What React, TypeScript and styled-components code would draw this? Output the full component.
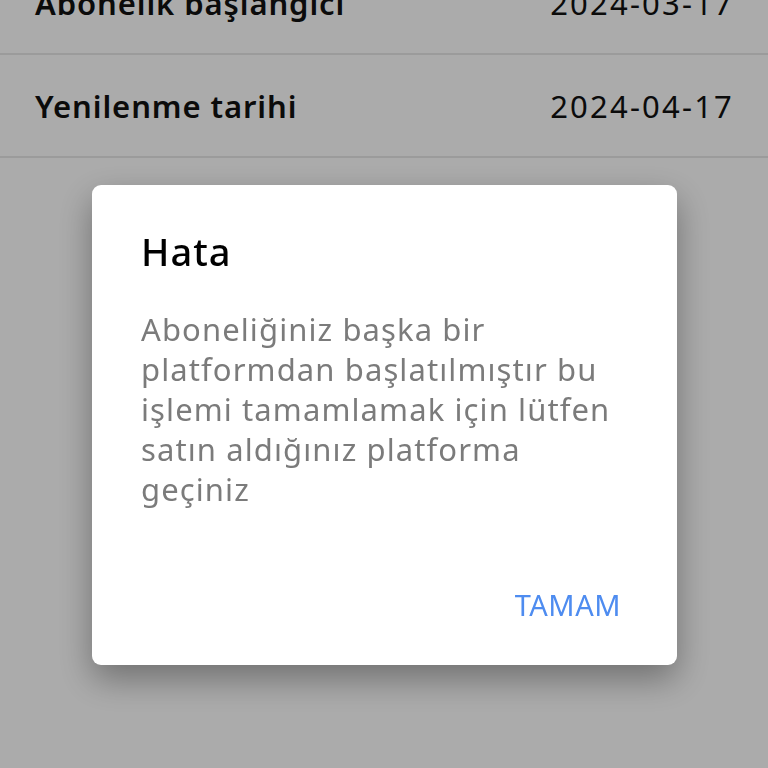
import React from 'react';
import styled, { createGlobalStyle } from 'styled-components';

const GlobalStyle = createGlobalStyle`
  html, body {
    margin: 0;
    padding: 0;
    background: #ffffff;
    font-family: 'Noto Sans', 'Open Sans', sans-serif;
    overflow: hidden;
  }
`;

// Subscription details list (scrolled so the first row is half off screen)
const Page = styled.div`
  width: 768px;
  height: 768px;
  background: #ffffff;
  overflow: hidden;
`;

const List = styled.div`
  display: flex;
  flex-direction: column;
  margin-top: -48px;
`;

const Row = styled.div`
  height: 101px;
  padding: 0 34px 0 35px;
  display: flex;
  align-items: center;
  justify-content: space-between;
  border-bottom: 2px solid #e8e8e8;
`;

const Label = styled.span`
  font-size: 31px;
  font-weight: 600;
  letter-spacing: 0.9px;
  color: #111;
`;

const Value = styled.span`
  font-size: 31px;
  color: #111;
  letter-spacing: 2.2px;
`;

// Modal layer
const Overlay = styled.div`
  position: fixed;
  inset: 0;
  background: rgba(0, 0, 0, 0.33);
  display: flex;
  justify-content: center;
  align-items: flex-start;
  padding-top: 185px;
`;

const Dialog = styled.div`
  width: 585px;
  height: 480px;
  box-sizing: border-box;
  margin-left: 1px;
  background: #ffffff;
  border-radius: 9px;
  box-shadow: 0 14px 34px rgba(0, 0, 0, 0.35);
  padding: 44px 56px 40px 49px;
  display: flex;
  flex-direction: column;
`;

const Title = styled.h2`
  margin: 0;
  font-size: 38px;
  font-weight: 500;
  letter-spacing: 1px;
  color: #000;
  line-height: 44px;
`;

const Message = styled.p`
  margin: 36px 0 0;
  font-size: 31px;
  line-height: 40px;
  letter-spacing: 1.1px;
  color: #7b7b7b;
`;

const Actions = styled.div`
  margin-top: auto;
  display: flex;
  justify-content: flex-end;
`;

const TextButton = styled.button`
  border: none;
  background: none;
  padding: 0;
  font-family: inherit;
  font-size: 29px;
  letter-spacing: 0.5px;
  color: #4e8cf0;
  line-height: 40px;
  cursor: pointer;
`;

const rows = [
  { label: 'Abonelik başlangıcı', value: '2024-03-17' },
  { label: 'Yenilenme tarihi', value: '2024-04-17' },
];

const App: React.FC = () => {
  return (
    <>
      <GlobalStyle />
      <Page>
        <List>
          {rows.map((r) => (
            <Row key={r.label}>
              <Label>{r.label}</Label>
              <Value>{r.value}</Value>
            </Row>
          ))}
        </List>
      </Page>
      <Overlay>
        <Dialog>
          <Title>Hata</Title>
          <Message>
            Aboneliğiniz başka bir platformdan başlatılmıştır bu işlemi tamamlamak için lütfen satın
            aldığınız platforma geçiniz
          </Message>
          <Actions>
            <TextButton>TAMAM</TextButton>
          </Actions>
        </Dialog>
      </Overlay>
    </>
  );
};

export default App;
